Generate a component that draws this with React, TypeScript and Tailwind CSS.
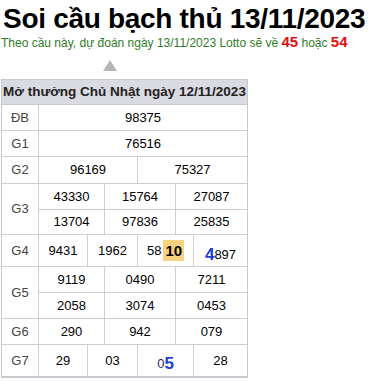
const label = "bg-white flex items-center justify-center text-[13px] text-[#444]";
const cell = "bg-white flex items-center justify-center text-[13px] text-black";

export default function App() {
  return (
    <div className="w-[372px] h-[382px] bg-white font-['Liberation_Sans',Arial,sans-serif] overflow-hidden">
      <h1 className="pl-[3px] pt-[5px] text-[28px] font-bold leading-[28px] tracking-[-0.3px] text-black whitespace-nowrap">
        Soi cầu bạch thủ 13/11/2023
      </h1>
      <p className="pl-[1px] text-[12px] leading-[17px] text-[#2f7d1f] whitespace-nowrap">
        Theo cầu này, dự đoán ngày 13/11/2023 Lotto sẽ về{" "}
        <b className="text-[15px] text-[#e01010]">45</b> hoặc{" "}
        <b className="text-[15px] text-[#e01010]">54</b>
      </p>
      <div className="ml-[103px] mt-[8px] w-0 h-0 border-l-[7px] border-r-[7px] border-b-[11px] border-l-transparent border-r-transparent border-b-[#b5b5b5]" />
      <div className="ml-[1px] mt-[8px] w-[247px] border border-[#c8c9ce] border-b-2">
        <div className="h-[25px] bg-[#d9dae2] flex items-center justify-center text-[13.5px] font-bold text-[#222] border-b border-[#c8c9ce] whitespace-nowrap">
          Mở thưởng Chủ Nhật ngày 12/11/2023
        </div>
        <div className="grid grid-cols-[36px_48px_16px_32px_37px_17px_53px] grid-rows-[25px_25px_26px_25px_24px_31px_25px_25px_25px_31px] gap-px bg-[#cfcfcf]">
          <div className={label}>ĐB</div>
          <div className={`${cell} col-span-6`}>98375</div>
          <div className={label}>G1</div>
          <div className={`${cell} col-span-6`}>76516</div>
          <div className={label}>G2</div>
          <div className={`${cell} col-span-3`}>96169</div>
          <div className={`${cell} col-span-3`}>75327</div>
          <div className={`${label} row-span-2`}>G3</div>
          <div className={`${cell} col-span-2`}>43330</div>
          <div className={`${cell} col-span-2`}>15764</div>
          <div className={`${cell} col-span-2`}>27087</div>
          <div className={`${cell} col-span-2`}>13704</div>
          <div className={`${cell} col-span-2`}>97836</div>
          <div className={`${cell} col-span-2`}>25835</div>
          <div className={label}>G4</div>
          <div className={cell}>9431</div>
          <div className={`${cell} col-span-2`}>1962</div>
          <div className={`${cell} col-span-2`}>
            58<span className="ml-[2px] px-[2px] bg-[#fcd27e] font-bold text-[15px] leading-[21px]">10</span>
          </div>
          <div className={`${cell} items-baseline pt-[8px]`}>
            <span className="font-bold text-[17px] text-[#1a3ed8]">4</span>897
          </div>
          <div className={`${label} row-span-2`}>G5</div>
          <div className={`${cell} col-span-2`}>9119</div>
          <div className={`${cell} col-span-2`}>0490</div>
          <div className={`${cell} col-span-2`}>7211</div>
          <div className={`${cell} col-span-2`}>2058</div>
          <div className={`${cell} col-span-2`}>3074</div>
          <div className={`${cell} col-span-2`}>0453</div>
          <div className={label}>G6</div>
          <div className={`${cell} col-span-2`}>290</div>
          <div className={`${cell} col-span-2`}>942</div>
          <div className={`${cell} col-span-2`}>079</div>
          <div className={label}>G7</div>
          <div className={cell}>29</div>
          <div className={`${cell} col-span-2`}>03</div>
          <div className={`${cell} col-span-2 items-baseline pt-[7px]`}>
            <span className="text-[#1f2a6e]">0</span>
            <span className="font-bold text-[17px] text-[#1a3ed8]">5</span>
          </div>
          <div className={cell}>28</div>
        </div>
      </div>
    </div>
  );
}
